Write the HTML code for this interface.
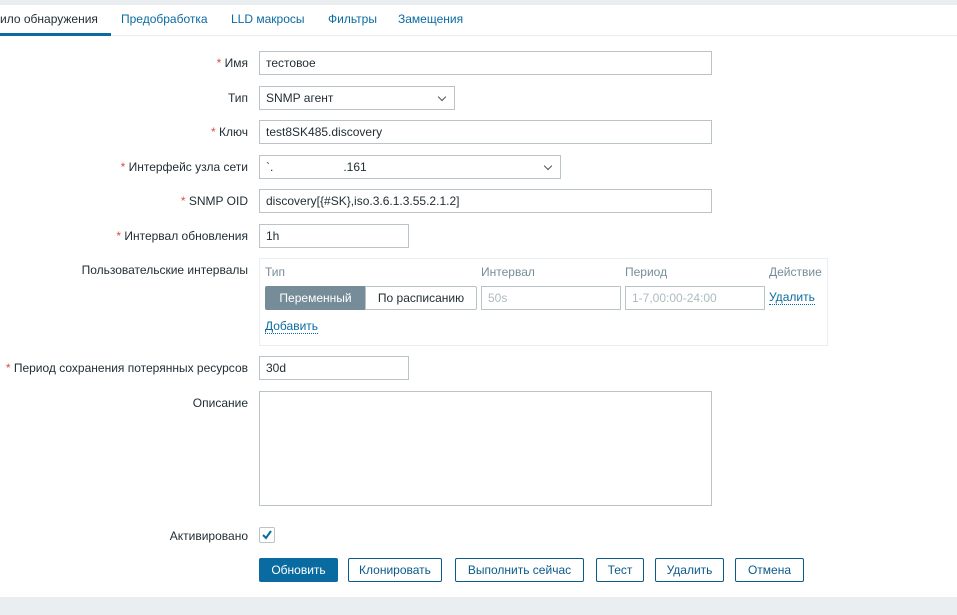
<!DOCTYPE html>
<html><head><meta charset="utf-8"><style>
*{box-sizing:border-box;margin:0;padding:0}
body{width:957px;height:615px;background:#fff;font-family:"Liberation Sans",Arial,sans-serif;font-size:12px;color:#1f2c33;position:relative;overflow:hidden}
.a{position:absolute}
.top{left:0;top:0;width:957px;height:5px;background:#ebeef0}
.bot{left:0;top:597px;width:957px;height:18px;background:#ebeef0}
.tabline{left:0;top:35px;width:957px;height:1px;background:#ebeef0}
.tab{top:12px;color:#0a6ba0;font-size:12px}
.lbl{width:248px;left:0;text-align:right;white-space:nowrap}
.lbl b{color:#d64e4e;font-weight:normal}
.in{border:1px solid #b9c3c8;background:#fff;padding-left:6px;line-height:22px;height:24px;white-space:nowrap}
.sel::after{content:"";position:absolute;right:9px;top:7px;width:5px;height:5px;border-right:1px solid #555;border-bottom:1px solid #555;transform:rotate(45deg)}
.btn{top:558px;height:24px;border:1px solid #0a5a88;color:#0a5a88;text-align:center;line-height:22px;border-radius:2px;background:#fff}
.lnk{color:#0a6ba0;border-bottom:1px dotted #0a6ba0;line-height:13px}
.hd{top:265px;color:#768d99}
</style></head><body>
<div class="a top"></div>
<div class="a tabline"></div>
<div class="a tab" style="left:0;color:#1f2c33">ило обнаружения</div>
<div class="a" style="left:0;top:33px;width:111px;height:3px;background:#0a6ba0"></div>
<div class="a tab" style="left:121px">Предобработка</div>
<div class="a tab" style="left:231px">LLD макросы</div>
<div class="a tab" style="left:328px">Фильтры</div>
<div class="a tab" style="left:398px">Замещения</div>

<div class="a lbl" style="top:56px"><b>*</b> Имя</div>
<div class="a in" style="left:259px;top:51px;width:453px">тестовое</div>
<div class="a lbl" style="top:91px">Тип</div>
<div class="a in sel" style="left:259px;top:86px;width:196px">SNMP агент</div>
<div class="a lbl" style="top:125px"><b>*</b> Ключ</div>
<div class="a in" style="left:259px;top:120px;width:453px">test8SK485.discovery</div>
<div class="a lbl" style="top:160px"><b>*</b> Интерфейс узла сети</div>
<div class="a in sel" style="left:259px;top:155px;width:302px">`.&nbsp;&nbsp;&nbsp;&nbsp;&nbsp;&nbsp;&nbsp;&nbsp;&nbsp;&nbsp;&nbsp;&nbsp;&nbsp;&nbsp;&nbsp;&nbsp;&nbsp;&nbsp;&nbsp;&nbsp;&nbsp;.161</div>
<div class="a lbl" style="top:194px"><b>*</b> SNMP OID</div>
<div class="a in" style="left:259px;top:189px;width:453px">discovery[{#SK},iso.3.6.1.3.55.2.1.2]</div>
<div class="a lbl" style="top:229px"><b>*</b> Интервал обновления</div>
<div class="a in" style="left:259px;top:224px;width:150px">1h</div>
<div class="a lbl" style="top:263px">Пользовательские интервалы</div>
<div class="a" style="left:259px;top:258px;width:569px;height:88px;border:1px solid #ebeef0"></div>
<div class="a hd" style="left:265px">Тип</div>
<div class="a hd" style="left:481px">Интервал</div>
<div class="a hd" style="left:625px">Период</div>
<div class="a hd" style="left:769px">Действие</div>
<div class="a" style="left:265px;top:286px;width:101px;height:24px;background:#768d99;color:#fff;text-align:center;line-height:24px;border-radius:2px 0 0 2px">Переменный</div>
<div class="a" style="left:365px;top:286px;width:112px;height:24px;border:1px solid #b9c3c8;text-align:center;line-height:22px;border-radius:0 2px 2px 0">По расписанию</div>
<div class="a in" style="left:481px;top:286px;width:140px;color:#acbbc2">50s</div>
<div class="a in" style="left:625px;top:286px;width:140px;color:#acbbc2">1-7,00:00-24:00</div>
<div class="a lnk" style="left:769px;top:291px">Удалить</div>
<div class="a lnk" style="left:265px;top:320px">Добавить</div>
<div class="a lbl" style="top:361px"><b>*</b> Период сохранения потерянных ресурсов</div>
<div class="a in" style="left:259px;top:356px;width:150px">30d</div>
<div class="a lbl" style="top:396px">Описание</div>
<div class="a" style="left:259px;top:391px;width:453px;height:115px;border:1px solid #b9c3c8"></div>
<div class="a lbl" style="top:529px">Активировано</div>
<div class="a" style="left:259px;top:527px;width:16px;height:16px;border:1px solid #b9c3c8;border-radius:2px"><svg width="14" height="14" viewBox="0 0 14 14"><path d="M3 7l3 3 5-7" fill="none" stroke="#0a6ba0" stroke-width="2"/></svg></div>
<div class="a btn" style="left:259px;width:79px;background:#0a6ba0;color:#fff;border-color:#0a6ba0">Обновить</div>
<div class="a btn" style="left:348px;width:94px">Клонировать</div>
<div class="a btn" style="left:455px;width:129px">Выполнить сейчас</div>
<div class="a btn" style="left:596px;width:48px">Тест</div>
<div class="a btn" style="left:655px;width:69px">Удалить</div>
<div class="a btn" style="left:735px;width:69px">Отмена</div>
<div class="a bot"></div>
</body></html>
